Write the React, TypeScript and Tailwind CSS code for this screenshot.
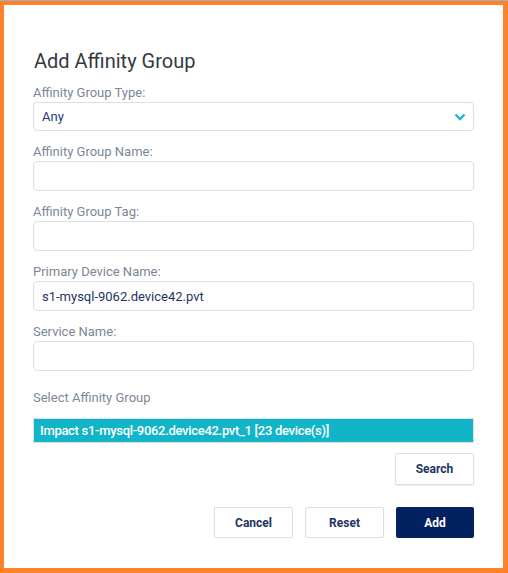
const labelCls = "block h-[18px] text-[13px] leading-[18px] text-[#7b8896]";
const inputCls =
    "block w-full h-[30px] rounded-[4px] border border-[#dcdfe3] bg-white px-2 text-[13px] text-[#1d3461] outline-none";

function Field({ label, value }: { label: string; value?: string }) {
    return (
        <div className="mb-3">
            <label className={labelCls}>{label}</label>
            <input className={inputCls} defaultValue={value ?? ""} />
        </div>
    );
}

function App() {
    return (
        <div
            className="w-[508px] h-[573px] border-t border-[#a5aebb] bg-white"
            style={{ fontFamily: "Roboto, 'Open Sans', sans-serif" }}
        >
            <div className="h-[572px] border-t-4 border-l-4 border-r-[5px] border-b-[5px] border-[#fe8229] bg-white pl-[29px] pr-[29px] pt-[42px]">
                {/* title */}
                <h2 className="pl-px text-[20px] leading-[28px] text-[#333a42] mb-[9px]">
                    Add Affinity Group
                </h2>

                {/* type select */}
                <div className="mb-3">
                    <label className={labelCls}>Affinity Group Type:</label>
                    <div className="flex h-[29px] items-center justify-between rounded-[4px] border border-[#dcdfe3] pl-2 pr-[7px]">
                        <span className="text-[13px] text-[#1d3a78]">Any</span>
                        <svg width="12" height="8" viewBox="0 0 12 8">
                            <polyline
                                points="1.5,1.5 6,6 10.5,1.5"
                                fill="none"
                                stroke="#1ab4cc"
                                strokeWidth="2.4"
                            />
                        </svg>
                    </div>
                </div>

                <Field label="Affinity Group Name:" />
                <Field label="Affinity Group Tag:" />
                <Field label="Primary Device Name:" value="s1-mysql-9062.device42.pvt" />
                <Field label="Service Name:" />

                {/* affinity group list */}
                <div className="pt-[6px] text-[13px] leading-[18px] text-[#7b8896]">
                    Select Affinity Group
                </div>
                <div className="mt-[11px] flex h-[25px] items-center border border-[#d9e2e6] bg-[#12b5c8] px-[6px] text-[13px] font-medium tracking-[-0.3px] text-white">
                    Impact s1-mysql-9062.device42.pvt_1 [23 device(s)]
                </div>

                <div className="mt-[10px] flex justify-end">
                    <button className="h-[32px] w-[79px] rounded-[2px] border border-[#dcdfe3] bg-white text-[12px] font-bold text-[#1d3461] shadow-[0_1px_1px_rgba(0,0,0,0.08)]">
                        Search
                    </button>
                </div>

                {/* buttons */}
                <div className="mt-[22px] flex justify-end gap-3">
                    <button className="h-[31px] w-[79px] rounded-[2px] border border-[#dcdfe3] bg-white text-[12px] font-bold text-[#1d3461]">
                        Cancel
                    </button>
                    <button className="h-[31px] w-[79px] rounded-[2px] border border-[#dcdfe3] bg-white text-[12px] font-bold text-[#1d3461]">
                        Reset
                    </button>
                    <button className="h-[31px] w-[78px] rounded-[2px] bg-[#03215e] text-[12px] font-bold text-white">
                        Add
                    </button>
                </div>
            </div>
        </div>
    );
}

export default App;
